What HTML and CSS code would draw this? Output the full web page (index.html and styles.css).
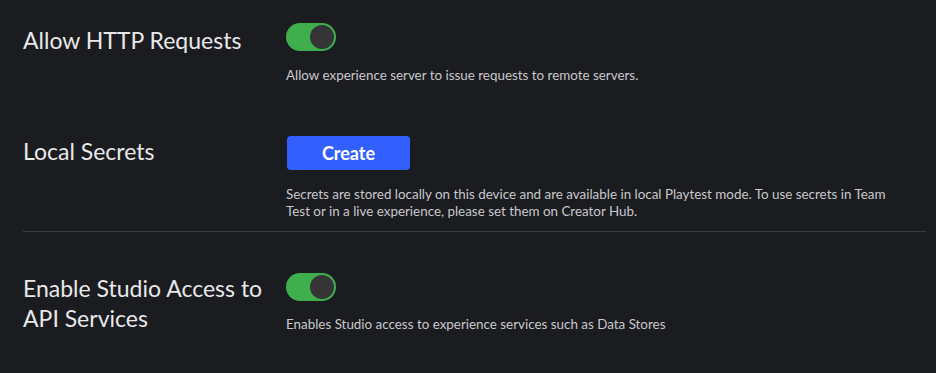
FILE: index.html
```html
<!DOCTYPE html>
<html lang="en">
<head>
  <meta charset="UTF-8">
  <title>Game Settings - Security</title>
  <link rel="stylesheet" href="styles.css">
</head>
<body>
  <div class="settings">
    <div class="row">
      <div class="label">Allow HTTP Requests</div>
      <div class="control">
        <div class="toggle on"><div class="knob"></div></div>
        <p class="desc">Allow experience server to issue requests to remote servers.</p>
      </div>
    </div>

    <div class="row row-secrets">
      <div class="label">Local Secrets</div>
      <div class="control">
        <button class="btn-create">Create</button>
        <p class="desc">Secrets are stored locally on this device and are available in local Playtest mode. To use secrets in Team Test or in a live experience, please set them on Creator Hub.</p>
      </div>
    </div>

    <div class="divider"></div>

    <div class="row row-api">
      <div class="label">Enable Studio Access to API Services</div>
      <div class="control">
        <div class="toggle on"><div class="knob"></div></div>
        <p class="desc">Enables Studio access to experience services such as Data Stores</p>
      </div>
    </div>
  </div>
</body>
</html>
```

FILE: styles.css
```css
body {
  margin: 0;
  background: #1b1c20;
  color: #e6e6e8;
  font-family: 'Lato', 'Open Sans', sans-serif;
}
.settings {
  padding: 23px 10px 0 23px;
}
.row {
  display: grid;
  grid-template-columns: 263px 1fr;
}
.label {
  font-size: 23px;
  line-height: 30px;
  padding-top: 2px;
  color: #e8e8ea;
}
.control {
  display: flex;
  flex-direction: column;
  align-items: flex-start;
  padding-right: 20px;
}
.toggle {
  width: 50px;
  height: 28px;
  border-radius: 14px;
  background: #3fae4d;
  display: flex;
  align-items: center;
  justify-content: flex-end;
  padding: 0 2px;
  box-sizing: border-box;
}
.knob {
  width: 24px;
  height: 24px;
  border-radius: 50%;
  background: #353538;
}
.desc {
  margin: 16px 0 0;
  font-size: 13.4px;
  line-height: 17px;
  color: #c8c8cc;
}
.row-secrets {
  margin-top: 52px;
}
.row-secrets .label {
  padding-top: 0;
}
.btn-create {
  width: 123px;
  height: 34px;
  margin-left: 1px;
  border: none;
  border-radius: 4px;
  background: #335fff;
  color: #fff;
  font-family: inherit;
  font-size: 18px;
  font-weight: bold;
}
.row-secrets .desc {
  margin-top: 16px;
}
.divider {
  height: 1px;
  background: #3a3b44;
  margin: 11px 0 41px;
}
.row-api .label {
  padding-top: 0;
}
.row-api .desc {
  margin-top: 15px;
}
```
